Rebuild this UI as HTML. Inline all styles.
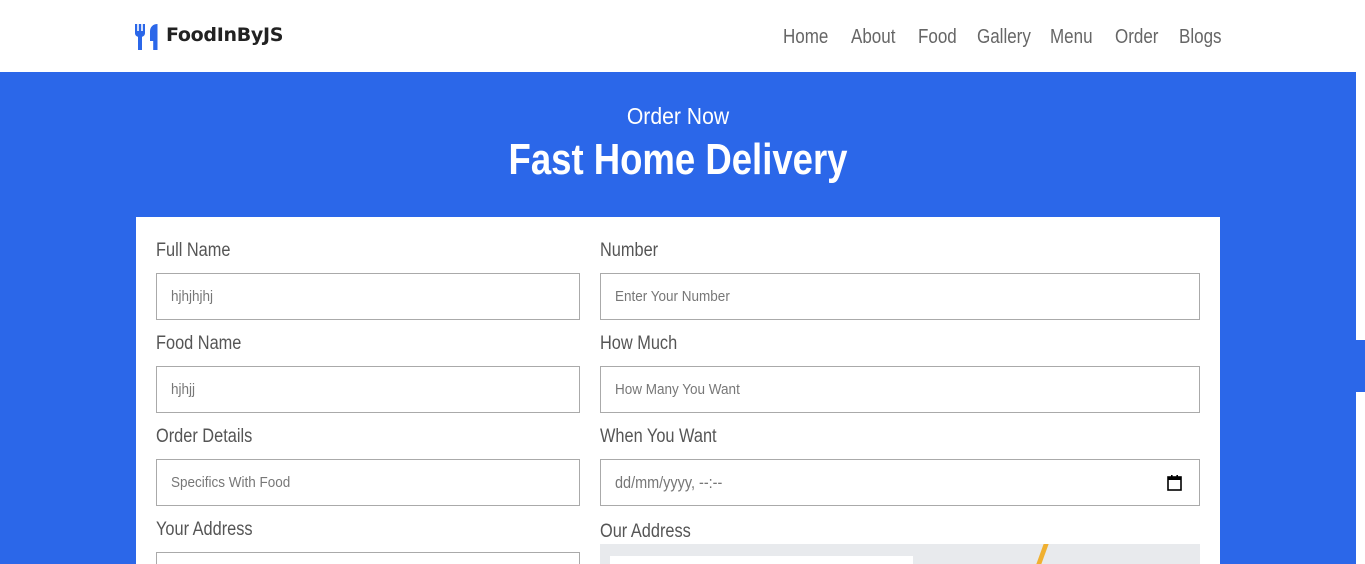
<!DOCTYPE html>
<html><head><meta charset="utf-8"><style>
*{margin:0;padding:0;box-sizing:border-box}
html,body{width:1365px;height:564px;overflow:hidden}
body{background:#fff;position:relative;font-family:"Liberation Sans",sans-serif;color:#555}
.a{position:absolute}
.n{position:absolute;top:26px;color:#666;font-size:20px;transform:scaleX(.85);transform-origin:left top;white-space:nowrap}
.lbl{position:absolute;font-size:19px;color:#555;transform:scaleX(.86);transform-origin:left top;white-space:nowrap}
.inp{position:absolute;height:47px;border:1px solid #aaa;background:#fff}
.inp span{position:absolute;left:14px;top:14px;font-size:15px;color:#777;transform:scaleX(.9);transform-origin:left top;white-space:nowrap}
.c{position:absolute;left:0;width:1356px;text-align:center;color:#fff;white-space:nowrap}
</style></head><body>
<svg class="a" style="left:135px;top:24px" width="23" height="26" viewBox="0 0 23 26"><path d="M0 0h2.2v7h1.6V0h2.4v7h1.6V0H10v9c0 2.2-1.5 3.5-3 3.8V26H3V12.8C1.5 12.5 0 11.2 0 9z" fill="#2b67e9"/><path d="M22.5 0v26h-4.3v-9H15V7.5C15 3 18 0 22.5 0z" fill="#2b67e9"/></svg>
<div class="a" style="left:166px;top:24px;font-family:'DejaVu Sans',sans-serif;font-weight:bold;font-size:19px;color:#222;letter-spacing:-0.3px">FoodInByJS</div>
<div class="n" style="left:783px">Home</div><div class="n" style="left:851px">About</div><div class="n" style="left:918px">Food</div><div class="n" style="left:977px">Gallery</div><div class="n" style="left:1050px">Menu</div><div class="n" style="left:1115px">Order</div><div class="n" style="left:1179px">Blogs</div>
<div class="a" style="left:0;top:72px;width:1356px;height:492px;background:#2b67e9"></div>
<div class="a" style="left:1356px;top:340px;width:9px;height:52px;background:#2b67e9"></div>
<div class="c" style="top:103px;font-size:23px;transform:scaleX(.92)">Order Now</div>
<div class="c" style="top:135px;font-size:44px;font-weight:bold;transform:scaleX(.83)">Fast Home Delivery</div>
<div class="a" style="left:136px;top:217px;width:1084px;height:347px;background:#fff"></div>
<div class="lbl" style="left:156px;top:240px">Full Name</div>
<div class="lbl" style="left:600px;top:240px">Number</div>
<div class="inp" style="left:156px;top:273px;width:424px"><span>hjhjhjhj</span></div>
<div class="inp" style="left:600px;top:273px;width:600px"><span>Enter Your Number</span></div>
<div class="lbl" style="left:156px;top:333px">Food Name</div>
<div class="lbl" style="left:600px;top:333px">How Much</div>
<div class="inp" style="left:156px;top:366px;width:424px"><span>hjhjj</span></div>
<div class="inp" style="left:600px;top:366px;width:600px"><span>How Many You Want</span></div>
<div class="lbl" style="left:156px;top:426px">Order Details</div>
<div class="lbl" style="left:600px;top:426px">When You Want</div>
<div class="inp" style="left:156px;top:459px;width:424px"><span>Specifics With Food</span></div>
<div class="inp" style="left:600px;top:459px;width:600px"><span style="font-size:17px;top:13px;transform:scaleX(.85)">dd/mm/yyyy, --:--</span></div>
<svg class="a" style="left:1167px;top:475px" width="15" height="16" viewBox="0 0 15 16"><rect x="1" y="2" width="13" height="13" fill="none" stroke="#000" stroke-width="1.6"/><rect x="1" y="2" width="13" height="3" fill="#000"/><rect x="4" y="0" width="1.6" height="3" fill="#000"/><rect x="9.4" y="0" width="1.6" height="3" fill="#000"/></svg>
<div class="lbl" style="left:156px;top:519px">Your Address</div>
<div class="lbl" style="left:600px;top:521px">Our Address</div>
<div class="a" style="left:156px;top:552px;width:424px;height:12px;border:1px solid #aaa;border-bottom:none"></div>
<div class="a" style="left:600px;top:544px;width:600px;height:20px;background:#e8eaed"></div>
<div class="a" style="left:610px;top:556px;width:303px;height:8px;background:#fff"></div>
<div class="a" style="left:1040px;top:544px;width:5px;height:20px;background:#f0b030;transform:skewX(-20deg)"></div>
</body></html>
